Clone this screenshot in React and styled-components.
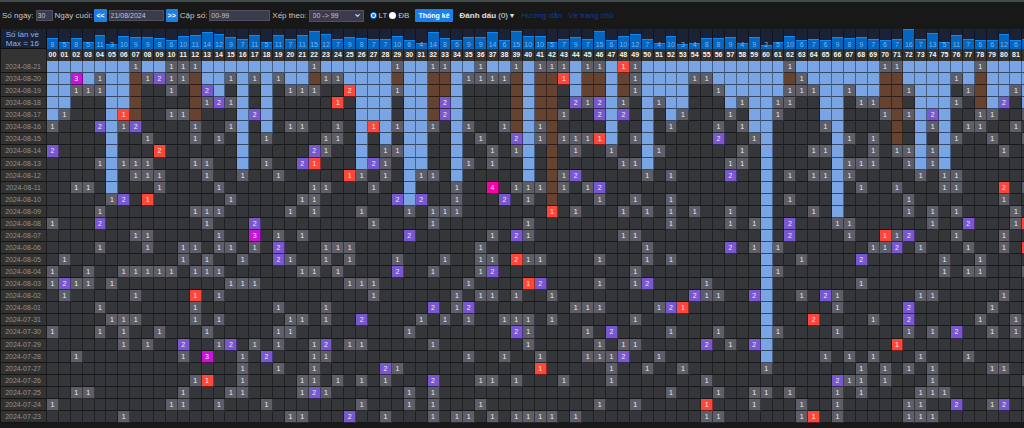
import React, { useState } from "react";
import styled, { createGlobalStyle } from "styled-components";
import { ChevronDown } from "lucide-react";

const GlobalStyle = createGlobalStyle`
  * {
    box-sizing: border-box;
  }

  body {
    margin: 0;
    background: #181818;
    color: #c4c4c4;
    font-family: "Liberation Sans", Arial, sans-serif;
    font-size: 8px;
    overflow: hidden;
  }
`;

const Page = styled.main`
  border-top: 2px solid #414b4c;
`;

const Toolbar = styled.form`
  display: flex;
  align-items: center;
  gap: 2px;
  height: 27px;
  padding: 0 2px;
  white-space: nowrap;
`;

const Label = styled.label`
  line-height: 12px;
`;

const TextInput = styled.input`
  width: ${(props) => props.$width}px;
  height: 11px;
  padding: 0 1px;
  border: 1px solid #50505e;
  background: #3b3b4d;
  color: #c4c4c8;
  font-family: inherit;
  font-size: 7px;
  outline: none;
`;

const Button = styled.button`
  height: 13px;
  padding: 0 ${(props) => (props.$small ? 2 : 3)}px;
  border: 0;
  border-radius: 1px;
  background: #1a80e8;
  color: #ffffff;
  font-family: inherit;
  font-size: 7px;
  font-weight: bold;
  line-height: 13px;
`;

const SelectBox = styled.span`
  display: grid;
  align-items: center;
  width: 55px;

  > * {
    grid-area: 1 / 1;
  }

  svg {
    justify-self: end;
    margin-right: 3px;
    color: #d8d8d8;
    pointer-events: none;
  }
`;

const Select = styled.select`
  appearance: none;
  width: 100%;
  height: 12px;
  padding: 0 3px;
  border: 1px solid #50505e;
  border-radius: 0;
  background: #3b3b4d;
  color: #c4c4c8;
  font-family: inherit;
  font-size: 7px;
`;

const RadioGroup = styled.div`
  display: flex;
  align-items: center;
  gap: 2px;
  padding: 0 4px;
`;

const Radio = styled.input`
  appearance: none;
  width: 7px;
  height: 7px;
  margin: 0;
  border-radius: 50%;
  background: #ffffff;

  &:checked {
    border: 1px solid #1a80e8;
    background: radial-gradient(#1a80e8 1px, #ffffff 2px);
  }
`;

const MarkButton = styled.button`
  padding: 0 5px;
  border: 0;
  background: none;
  color: #e0e0e0;
  font-family: inherit;
  font-size: 8px;
`;

const Links = styled.nav`
  display: flex;
  gap: 6px;
`;

const Link = styled.a`
  color: #0d3ca6;
  text-decoration: none;
`;

const Table = styled.table`
  display: block;
  width: 101%;
  background: #35363a;
  cursor: default;
`;

const Head = styled.thead`
  display: block;
`;

const Body = styled.tbody`
  display: grid;
  grid-auto-rows: minmax(12px, 1fr);
  min-height: 362px;
`;

const Row = styled.tr`
  display: grid;
  grid-template-columns: 47px repeat(83, minmax(0, 1fr));
  height: ${(props) => (props.$height ? `${props.$height}px` : "auto")};
`;

const Corner = styled.th`
  padding: 1px 7px 0 0;
  border-right: 1px solid #0d0f14;
  border-bottom: 1px solid #0d0f14;
  border-left: 1px solid #0d0f14;
  background: #1c2236;
  color: #86b6ea;
  font-weight: normal;
  line-height: 9px;
  text-align: right;
`;

const CountCell = styled.td`
  display: flex;
  align-items: flex-end;
  padding: 0;
  border-right: 1px solid #0d1524;
  background: #1c2236;
`;

const Bar = styled.div`
  display: flex;
  align-items: flex-end;
  justify-content: center;
  width: 100%;
  border-top: 1px solid #1488f0;
  background: #0566c0;
  color: #76b4f2;
  font-size: 7px;
  line-height: 9px;
`;

const NumberCell = styled.th`
  padding: 0;
  border-right: 1px solid #1c1c1c;
  border-bottom: 1px solid #141414;
  background: #333333;
  color: #f4f4f4;
  font-size: 7px;
  font-weight: bold;
  line-height: 12px;
  text-align: center;
`;

const DateCell = styled.th`
  padding: 0 5px 0 0;
  border-right: 1px solid #1c1c1c;
  border-bottom: 1px solid #141414;
  border-left: 1px solid #141414;
  background: #333333;
  color: #919191;
  font-size: 7px;
  font-weight: normal;
  line-height: 11px;
  text-align: right;
`;

const colors = {
  empty: "#35363a",
  waiting: "#79a5e4",
  gap: "#664231",
  hit1: "#5e5e68",
  hit2: "#7758cf",
  hit3: "#c814da",
  hit4: "#ff00a6",
  special: "#ff463a",
};

const Cell = styled.td`
  padding: 0;
  border-right: 1px solid rgba(0, 0, 0, 0.4);
  border-bottom: 1px solid rgba(0, 0, 0, 0.55);
  background: ${(props) => colors[props.$kind]};
  color: #eeeeee;
  font-size: 7px;
  line-height: 11px;
  text-align: center;
`;

// "9:2" is number 09 drawn twice, "6!" is number 06 with the special prize
const results = [
  ["2024-08-21", "7 10 11 12 22 29 32 33 36 39 41 42 43 45 46 48! 49 62 70 71 78"],
  ["2024-08-20", "2:3 4 8 9:2 10 11 15 17 19 23 24 35 36 37 38 43! 49 54 55 63 76"],
  ["2024-08-19", "2 3 4 10 13:2 20 21 22 25:2! 29 49 56 62 63 64 67 72 77 81"],
  ["2024-08-18", "13 14:2 15 24! 33:2 44:2 45 46:2 48 51 58 61 62 68 69 76 80:2"],
  ["2024-08-17", "1 6! 10 11 17:2 33:2 43 46:2 48:2 53 57 61 70 72 74:2 78 79 82"],
  ["2024-08-16", "0 4:2 6 7:2 12 15 20 21 24 27! 29 32 35 38 41 52 56 58 65 74 77 78 81"],
  ["2024-08-15", "8 12 14 18 23 24 36 39:2 41 43 44 45 46! 49 56:2 59 67 69 76 79 82"],
  ["2024-08-14", "0:2 9:2! 22:2 23 28 29 37 39 44 47 51 58 64 65 69 71 72 74 80"],
  ["2024-08-13", "4 6 7 8 12 13 18 21:2 22! 27:2 28 35 37 48 49 57 58 67 68 69 72 74"],
  ["2024-08-12", "7 8 9 13 16 19 25! 26 28 31 32 43 44:2 50 52 57:2 62 64 65 67 73 75 76"],
  ["2024-08-11", "2 3 9 14 22 23 27 34 37:4 39 40 41 43 45 46:2 68 71 75 76 80:2! 82"],
  ["2024-08-10", "5 6:2 8! 15 21 22 29:2 31:2 34 38:2 40 46 49 52 62 72 80"],
  ["2024-08-09", "4 12 13 14 20 22 26 30 32 33 34 42! 44 48 50 52 54 57 64 72 74 76 81"],
  ["2024-08-08", "0 4:2 13 17:2 27 32 40 52 57 59 62:2 66 67 74 77:2 81 82!"],
  ["2024-08-07", "7 8 14 17:3 19 21 30:2 37 39:2 40 48 49 62:2 67 70! 71 72:2 76 80"],
  ["2024-08-06", "4 8 11 12 14 15 17 19:2 23 24 25 36 50 57:2 59 61 69 70 71:2 73 77 80 82!"],
  ["2024-08-05", "1 11 13 16 19:2 20 23 25 29 33 36 37 39:2! 40 41 46 50 52 63 68:2 75 78"],
  ["2024-08-04", "0 3 6 7 8 9 10 12 13 14 21 22 24 29:2 32 36 37:2 49 61 75 77 78 82"],
  ["2024-08-03", "0 1:2 2 3 5 15 16 17 25 26 27 35 40! 41:2 46 49 50:2 55 68"],
  ["2024-08-02", "1 7 12! 14 27 34 36 37 39 42 54:2 55 56 59:2 63 65:2 66 73 74 80"],
  ["2024-08-01", "4 12 19 23 32:2 34 35:2 44 45 46 51 52:2 53! 66 72:2 79"],
  ["2024-07-31", "5 6 7 12 14 20 21 23 26:2 31 33 35 38 39 40 42 49 64:2! 69 72:2 78 81"],
  ["2024-07-30", "0 4 6 9 13 19 20 30 39:2 40 45 47:2 52 56 61 66 72 74 76:2 79 81"],
  ["2024-07-29", "6 8 11:2 14 15:2 17 19 22 23:2 25 26 32 40 46 48 49 55:2 57 59:2 71!"],
  ["2024-07-28", "2 11 13:3 16 18:2 22 23 35 38 41 45 46 47 48:2 51 65 67 69 73 77"],
  ["2024-07-27", "16 19 22 28:2 29 41! 47 50 53 60 68 70 72 74 79 80"],
  ["2024-07-26", "12 13! 16 21 22 24 26 28 32:2 36 37 39 43 47 55 66:2 67 68 70 74 82"],
  ["2024-07-25", "2 3 11 15 16 21 22:2 23 30 32 52 56 59 60 62 66 68 73 74 75"],
  ["2024-07-24", "0 10 11 14 18 26 30 32 36 46 49 55! 59 63 66 72 73 76:2 79 80:2"],
  ["2024-07-23", "6 20 21 25:2 28 32 34 35 37 39 40 41 42 44 55 56 63 64! 66 72 73 74"],
];

const numbers = Array.from({ length: 83 }, (_, i) => i);
// the last column only peeks in at the edge, so it gets no text
const lastColumn = 82;

const days = results.map(([date, text]) => {
  const hits = {};
  text.split(" ").forEach((item) => {
    const [number, times] = item.replace("!", "").split(":");
    hits[number] = { times: Number(times || 1), special: item.endsWith("!") };
  });
  return { date, hits };
});

const counts = numbers.map((n) =>
  days.reduce((sum, day) => sum + (day.hits[n] ? day.hits[n].times : 0), 0)
);

const getKind = (row, n) => {
  const hit = days[row].hits[n];
  if (hit) return hit.special ? "special" : `hit${hit.times}`;

  const before = days.slice(0, row).filter((day) => day.hits[n]).length;
  if (before === 0) return "waiting";
  if (before === 1 && days[0].hits[n]) return "gap";
  return "empty";
};

const pad = (n) => String(n).padStart(2, "0");

const Filters = () => {
  const [type, setType] = useState("LT");

  return (
    <Toolbar onSubmit={(e) => e.preventDefault()}>
      <Label htmlFor="days">Số ngày:</Label>
      <TextInput id="days" $width={17} defaultValue="30" />
      <Label htmlFor="last">Ngày cuối:</Label>
      <Button type="button" $small>
        &lt;&lt;
      </Button>
      <TextInput id="last" $width={55} defaultValue="21/08/2024" />
      <Button type="button" $small>
        &gt;&gt;
      </Button>
      <Label htmlFor="pairs">Cặp số:</Label>
      <TextInput id="pairs" $width={61} defaultValue="00-99" />
      <Label htmlFor="sort">Xếp theo:</Label>
      <SelectBox>
        <Select id="sort" defaultValue="number">
          <option value="number">00 -&gt; 99</option>
        </Select>
        <ChevronDown size={7} strokeWidth={4} />
      </SelectBox>
      <RadioGroup>
        {["LT", "ĐB"].map((item) => (
          <React.Fragment key={item}>
            <Radio
              type="radio"
              name="type"
              id={item}
              checked={type === item}
              onChange={() => setType(item)}
            />
            <Label htmlFor={item}>{item}</Label>
          </React.Fragment>
        ))}
      </RadioGroup>
      <Button type="submit">Thống kê</Button>
      <MarkButton type="button">
        <b>Đánh dấu</b> (0) ▾
      </MarkButton>
      <Links>
        <Link href="#help">Hướng dẫn</Link>
        <Link href="#home">Về trang chủ</Link>
      </Links>
    </Toolbar>
  );
};

const App = () => {
  return (
    <Page>
      <GlobalStyle />
      <Filters />
      <Table>
        <Head>
          <Row $height={20}>
            <Corner scope="row">
              Số lần về
              <br />
              Max = 16
            </Corner>
            {counts.map((count, n) => (
              <CountCell key={n}>
                <Bar style={{ height: `${10 + count * 5.5}%` }}>
                  {n < lastColumn && count}
                </Bar>
              </CountCell>
            ))}
          </Row>
          <Row $height={12}>
            <DateCell as="td" />
            {numbers.map((n) => (
              <NumberCell key={n} scope="col">
                {n < lastColumn && pad(n)}
              </NumberCell>
            ))}
          </Row>
        </Head>
        <Body>
          {days.map((day, row) => (
            <Row key={day.date}>
              <DateCell scope="row">{day.date}</DateCell>
              {numbers.map((n) => (
                <Cell key={n} $kind={getKind(row, n)}>
                  {n < lastColumn && day.hits[n] ? day.hits[n].times : ""}
                </Cell>
              ))}
            </Row>
          ))}
        </Body>
      </Table>
    </Page>
  );
};

export default App;
